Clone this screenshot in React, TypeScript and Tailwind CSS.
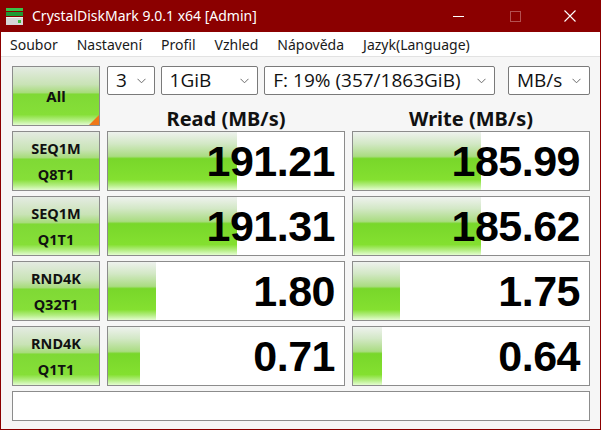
import React from "react";

const font = { fontFamily: '"Noto Sans", "Open Sans", sans-serif' };

const rows = [
  { a: "SEQ1M", b: "Q8T1", read: "191.21", write: "185.99", rw: 129, ww: 128 },
  { a: "SEQ1M", b: "Q1T1", read: "191.31", write: "185.62", rw: 129, ww: 128 },
  { a: "RND4K", b: "Q32T1", read: "1.80", write: "1.75", rw: 48, ww: 47 },
  { a: "RND4K", b: "Q1T1", read: "0.71", write: "0.64", rw: 32, ww: 29 },
];

function Chevron() {
  return (
    <svg width="9" height="6" viewBox="0 0 9 6" className="shrink-0">
      <path d="M0.5 0.8 L4.5 4.8 L8.5 0.8" fill="none" stroke="#6b6b6b" strokeWidth="1" />
    </svg>
  );
}

function Combo({ text, w }: { text: string; w: string }) {
  return (
    <div
      className={`${w} h-[29px] flex items-center justify-between rounded-[2px] border border-[#7a7a7a] bg-white pl-[8px] pr-[8px] text-[19px] text-[#111]`}
      style={{ fontFamily: '"Open Sans", "Noto Sans", sans-serif' }}
    >
      <span className="leading-none">{text}</span>
      <Chevron />
    </div>
  );
}

function Label({ a, b }: { a: string; b: string }) {
  return (
    <div className="h-[60px] flex flex-col items-center justify-center gap-[11px] border border-[#8c8c8c] bg-[linear-gradient(to_bottom,#e4ebe2_0%,#c9e3b6_30%,#a8dc7c_44%,#7fd935_47%,#86df38_82%,#b4ee84_92%,#e2fbd0_100%)] text-[14.5px] font-bold leading-none text-[#111]">
      <span>{a}</span>
      <span>{b}</span>
    </div>
  );
}

function Cell({ value, bar }: { value: string; bar: number }) {
  return (
    <div className="relative h-[60px] flex items-center justify-end border border-[#8c8c8c] bg-white pr-[9px]">
      <div
        className="absolute left-0 top-0 bottom-0 bg-[linear-gradient(to_bottom,#eef2ee_0%,#d3e8c6_20%,#aadc82_42%,#78d72a_46%,#84e030_82%,#b6ee86_92%,#e4fdd0_100%)]"
        style={{ width: bar }}
      />
      <span
        className="relative text-[43px] font-bold leading-none tracking-[-0.5px] text-black"
        style={{ fontFamily: '"Liberation Sans", Arial, sans-serif' }}
      >
        {value}
      </span>
    </div>
  );
}

function AppIcon() {
  return (
    <svg width="19" height="19" viewBox="0 0 19 19">
      <rect x="1" y="1" width="17" height="3" fill="#39c24a" />
      <rect x="1" y="5" width="17" height="4" fill="#1f9a34" />
      <rect x="1" y="10" width="17" height="8" fill="#d6d6d6" />
      <rect x="1" y="10" width="17" height="1" fill="#f2f2f2" />
      <rect x="13" y="13" width="3" height="3" fill="#3fbf3f" />
    </svg>
  );
}

export default function App() {
  return (
    <div className="w-[601px] h-[430px] overflow-hidden bg-[#8b0000] flex flex-col" style={font}>
      <div className="h-[32px] shrink-0 flex items-center text-white">
        <div className="pl-[5px] pr-[8px] flex items-center">
          <AppIcon />
        </div>
        <span className="text-[14px] leading-none">CrystalDiskMark 9.0.1 x64 [Admin]</span>
        <div className="ml-auto flex items-center h-full">
          <div className="w-[57px] h-full flex items-center justify-center">
            <div className="w-[11px] h-[1px] bg-white" />
          </div>
          <div className="w-[57px] h-full flex items-center justify-center">
            <div className="w-[11px] h-[11px] border border-[#b45050]" />
          </div>
          <div className="w-[57px] h-full flex items-center justify-center pr-[6px]">
            <svg width="12" height="12" viewBox="0 0 12 12">
              <path d="M0.5 0.5 L11.5 11.5 M11.5 0.5 L0.5 11.5" stroke="#fff" strokeWidth="1.1" />
            </svg>
          </div>
        </div>
      </div>
      <div className="flex-1 mx-[1px] mb-[1px] flex flex-col bg-[#f6f6f6]">
        <div className="h-[25px] shrink-0 flex items-center gap-[19px] bg-white border-b border-[#e2e2e2] pl-[9px] text-[14px] text-[#1a1a1a]">
          <span>Soubor</span>
          <span>Nastavení</span>
          <span>Profil</span>
          <span>Vzhled</span>
          <span>Nápověda</span>
          <span>Jazyk(Language)</span>
        </div>
        <div className="pt-[9px] pl-[11px] grid grid-cols-[88px_238px_238px] gap-x-[7px] gap-y-[5px]">
          <div className="relative h-[60px] flex items-center justify-center border border-[#8c8c8c] bg-[linear-gradient(to_bottom,#e4ebe2_0%,#c9e3b6_30%,#a8dc7c_44%,#7fd935_47%,#86df38_82%,#b4ee84_92%,#e2fbd0_100%)] text-[15px] font-bold text-[#111]">
            All
            <div className="absolute right-0 bottom-0 w-0 h-0 border-l-[10px] border-l-transparent border-b-[10px] border-b-[#f07818]" />
          </div>
          <div className="col-span-2 h-[60px] flex flex-col">
            <div className="flex gap-[6px]">
              <Combo text="3" w="w-[48px]" />
              <Combo text="1GiB" w="w-[99px]" />
              <Combo text="F: 19% (357/1863GiB)" w="w-[234px]" />
              <div className="w-[1px]" />
              <Combo text="MB/s" w="w-[83px]" />
            </div>
            <div className="flex-1 grid grid-cols-2 gap-x-[7px] items-center text-[20px] font-bold leading-none text-[#111]">
              <div className="text-center pt-[14px]">Read (MB/s)</div>
              <div className="text-center pt-[14px]">Write (MB/s)</div>
            </div>
          </div>
          {rows.map((r, i) => (
            <React.Fragment key={i}>
              <Label a={r.a} b={r.b} />
              <Cell value={r.read} bar={r.rw} />
              <Cell value={r.write} bar={r.ww} />
            </React.Fragment>
          ))}
          <div className="col-span-3 h-[30px] border border-[#8c8c8c] bg-white" />
        </div>
      </div>
    </div>
  );
}
